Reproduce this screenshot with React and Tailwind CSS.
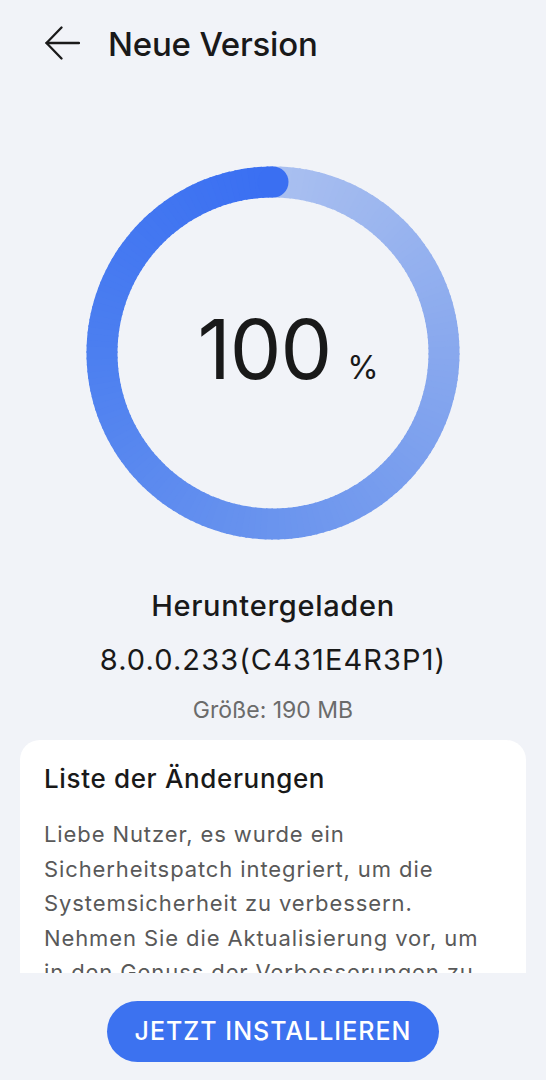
import React from "react";

function lerpColor(stops, u) {
  for (let i = 0; i < stops.length - 1; i++) {
    const [u0, c0] = stops[i];
    const [u1, c1] = stops[i + 1];
    if (u >= u0 && u <= u1) {
      const t = (u - u0) / (u1 - u0);
      const r = Math.round(c0[0] + (c1[0] - c0[0]) * t);
      const g = Math.round(c0[1] + (c1[1] - c0[1]) * t);
      const b = Math.round(c0[2] + (c1[2] - c0[2]) * t);
      return `rgb(${r},${g},${b})`;
    }
  }
  const c = stops[stops.length - 1][1];
  return `rgb(${c[0]},${c[1]},${c[2]})`;
}

const STOPS = [
  [0, [170, 192, 240]],
  [0.25, [136, 168, 238]],
  [0.5, [106, 148, 238]],
  [0.75, [76, 127, 240]],
  [1, [58, 111, 242]],
];

function Ring() {
  const size = 374;
  const cx = size / 2;
  const cy = size / 2;
  const r = 171;
  const sw = 31;
  const N = 180;
  const segs = [];
  for (let i = 0; i < N; i++) {
    const a0 = (i / N) * 360;
    const a1 = ((i + 1) / N) * 360 + (i < N - 1 ? 0.6 : 0);
    const rad0 = ((a0 - 90) * Math.PI) / 180;
    const rad1 = ((a1 - 90) * Math.PI) / 180;
    const x0 = cx + r * Math.cos(rad0);
    const y0 = cy + r * Math.sin(rad0);
    const x1 = cx + r * Math.cos(rad1);
    const y1 = cy + r * Math.sin(rad1);
    segs.push(
      <path
        key={i}
        d={`M ${x0} ${y0} A ${r} ${r} 0 0 1 ${x1} ${y1}`}
        stroke={lerpColor(STOPS, (i + 0.5) / N)}
        strokeWidth={sw}
        fill="none"
      />
    );
  }
  return (
    <svg width={size} height={size} viewBox={`0 0 ${size} ${size}`} className="absolute inset-0">
      {segs}
      <circle cx={cx} cy={cy - r} r={sw / 2} fill="rgb(58,111,242)" />
    </svg>
  );
}

export default function App() {
  const font = { fontFamily: "Inter, 'Noto Sans', sans-serif" };
  return (
    <div
      className="w-[546px] h-[1080px] bg-[#f1f3f8] flex flex-col overflow-hidden text-[#191919]"
      style={font}
    >
      {/* Header */}
      <div className="h-[88px] flex items-center pl-[44px] shrink-0">
        <svg width="36" height="36" viewBox="0 0 36 36" fill="none" stroke="#1a1a1a" strokeWidth="2.3" strokeLinecap="round" strokeLinejoin="round">
          <path d="M2.5 17 H35" />
          <path d="M17.5 1.5 L2.5 17 L17.5 32.5" />
        </svg>
        <div className="ml-[28px] text-[33px] leading-[40px] font-medium tracking-[-0.2px]">Neue Version</div>
      </div>

      {/* Ring */}
      <div className="mt-[78px] mx-auto relative w-[374px] h-[374px] shrink-0">
        <Ring />
        <div className="absolute inset-0 flex items-center justify-center pl-[30px] pb-[6px]">
          <div className="flex items-baseline">
            <span className="text-[82px] leading-none font-normal tracking-[-1px]">100</span>
            <span className="ml-[16px] text-[32px] leading-none font-normal">%</span>
          </div>
        </div>
      </div>

      {/* Info */}
      <div className="mt-[39px] flex flex-col items-center shrink-0">
        <div className="text-[29px] leading-[54px] font-medium tracking-[0.7px]">Heruntergeladen</div>
        <div className="text-[29px] leading-[54px] font-normal tracking-[1.1px]">8.0.0.233(C431E4R3P1)</div>
        <div className="text-[23px] leading-[46px] text-[#6b6b6b]">Größe: 190 MB</div>
      </div>

      {/* Card */}
      <div className="mt-[7px] mx-[20px] h-[233px] overflow-hidden shrink-0">
        <div className="bg-white rounded-[20px] pl-[24px] pr-[10px] pt-[22px] pb-[40px]">
          <div className="text-[26px] leading-[34px] font-medium tracking-[0.65px]">Liste der Änderungen</div>
          <div className="mt-[21px] text-[22px] leading-[34.6px] text-[#595959] tracking-[0.9px]">
            <div className="whitespace-nowrap">Liebe Nutzer, es wurde ein</div>
            <div className="whitespace-nowrap">Sicherheitspatch integriert, um die</div>
            <div className="whitespace-nowrap">Systemsicherheit zu verbessern.</div>
            <div className="whitespace-nowrap">Nehmen Sie die Aktualisierung vor, um</div>
            <div className="whitespace-nowrap">in den Genuss der Verbesserungen zu</div>
            <div className="whitespace-nowrap">kommen.</div>
          </div>
        </div>
      </div>

      {/* Button */}
      <div className="mt-[28px] flex justify-center shrink-0">
        <button className="w-[332px] h-[61px] rounded-full bg-[#3c72f0] text-white text-[25px] font-medium tracking-[1px]">
          JETZT INSTALLIEREN
        </button>
      </div>
    </div>
  );
}
